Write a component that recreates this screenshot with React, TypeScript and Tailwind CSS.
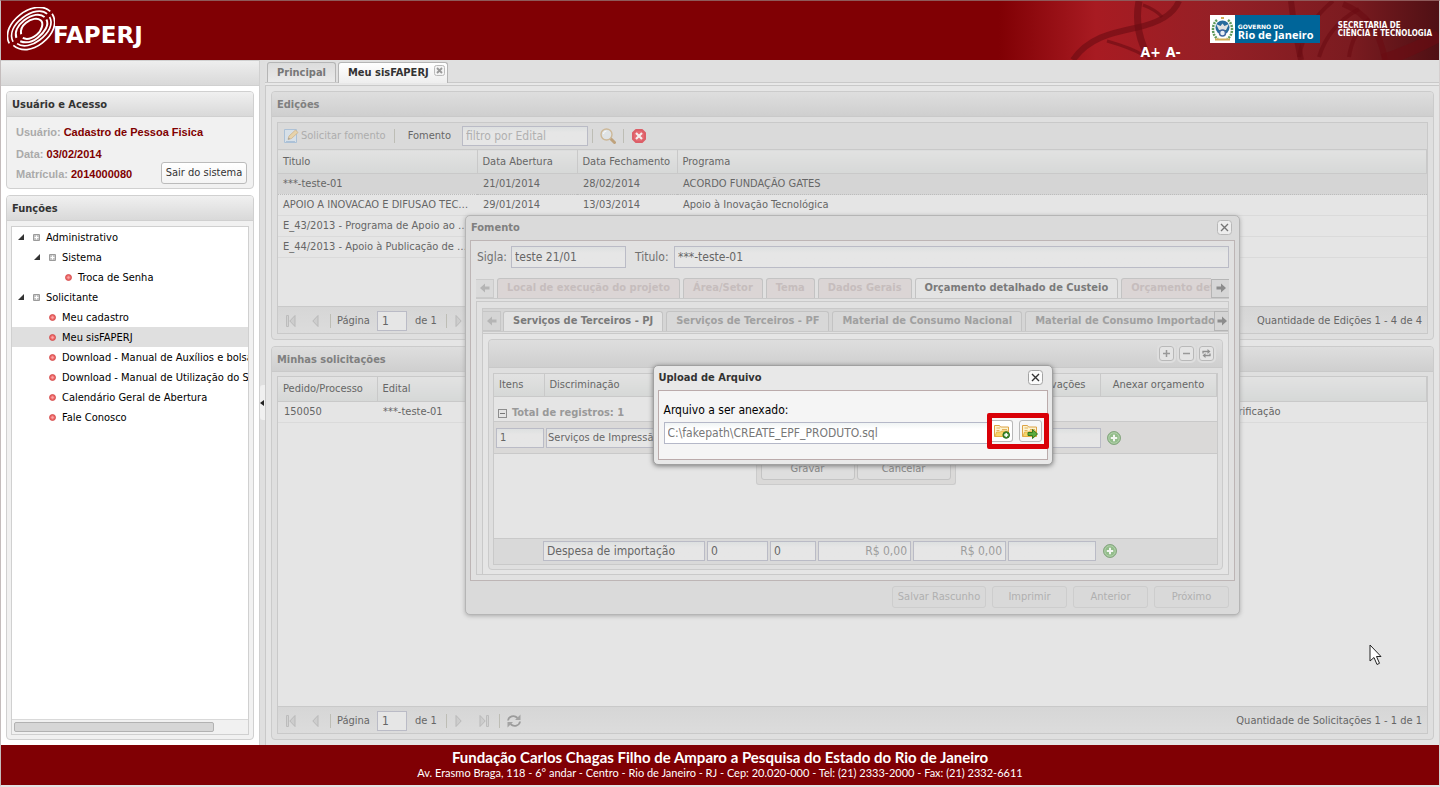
import { ReactNode } from "react";
import clsx from "clsx";

const editais = [
  { titulo: "***-teste-01", abertura: "21/01/2014", fechamento: "28/02/2014", programa: "ACORDO FUNDAÇÃO GATES" },
  { titulo: "APOIO A INOVACAO E DIFUSAO TECNOLOGICA", abertura: "29/01/2014", fechamento: "13/03/2014", programa: "Apoio à Inovação Tecnológica" },
  { titulo: "E_43/2013 - Programa de Apoio ao Desenvolvimento", abertura: "", fechamento: "", programa: "" },
  { titulo: "E_44/2013 - Apoio à Publicação de Periódicos", abertura: "", fechamento: "", programa: "" },
];

const menu = [
  { label: "Administrativo", level: 0, folder: true },
  { label: "Sistema", level: 1, folder: true },
  { label: "Troca de Senha", level: 2 },
  { label: "Solicitante", level: 0, folder: true },
  { label: "Meu cadastro", level: 1 },
  { label: "Meu sisFAPERJ", level: 1, selected: true },
  { label: "Download - Manual de Auxílios e bolsas", level: 1 },
  { label: "Download - Manual de Utilização do SisFAPERJ", level: 1 },
  { label: "Calendário Geral de Abertura", level: 1 },
  { label: "Fale Conosco", level: 1 },
];

const indent = ["pl-[6px]", "pl-[22px]", "pl-[38px]"];

/* Icons */

function CloseBox({ dim = false }: { dim?: boolean }) {
  return (
    <svg width="15" height="15" viewBox="0 0 15 15" className={clsx("shrink-0", dim && "opacity-60")}>
      <rect x=".5" y=".5" width="14" height="14" rx="3" fill="#fbfbfb" stroke="#a3a3a3" />
      <path d="M4 4l7 7M11 4l-7 7" stroke="#333" strokeWidth="1.4" />
    </svg>
  );
}

function GreenPlus() {
  return (
    <svg width="14" height="14" viewBox="0 0 14 14">
      <circle cx="7" cy="7" r="6.5" fill="#93bd8b" stroke="#86a581" />
      <circle cx="7" cy="7" r="5.2" fill="none" stroke="#b1d0aa" />
      <path d="M7 3.8v6.4M3.8 7h6.4" stroke="#f2f5f1" strokeWidth="2" />
    </svg>
  );
}

function FolderIcon({ kind }: { kind: "add" | "go" }) {
  return (
    <svg width="16" height="16" viewBox="0 0 16 16">
      <path d="M.5 13.5v-11h5l1 1.500h8v9.500z" fill="#fdf3cf" stroke="#dda345" />
      <path d="M2.500 5h3.500M8 6.500h5M2.500 7.500h3" stroke="#e2b25c" />
      <path d="M1 13.500l1.500-4.500h4l1-1h7v5.500z" fill="#f7d468" stroke="#e3ab40" strokeWidth=".8" />
      {kind === "add" ? (
        <>
          <circle cx="12.2" cy="12" r="3.3" fill="#3f8f2f" stroke="#2a6a20" />
          <path d="M12.2 10v4M10.2 12h4" stroke="#fff" strokeWidth="1.4" />
        </>
      ) : (
        <path d="M6 9.500h4.500V6.500l5 4.500-5 4.500V12.500H6z" fill="#5bab3c" stroke="#35791f" />
      )}
    </svg>
  );
}

function PageEditIcon() {
  return (
    <svg width="16" height="16" viewBox="0 0 16 16" className="opacity-60">
      <path d="M1.500 1.500h12v13h-12z" fill="#d6e4f2" stroke="#8fb2d6" />
      <path d="M3 14h9" stroke="#8fb2d6" strokeWidth="2" />
      <path d="M5 11.500l1-3.500 6.500-6 2.500 2.500-6.500 6z" fill="#f0d08c" stroke="#c79a5b" strokeWidth=".8" />
      <path d="M5 11.500l.6-2 1.500 1.500z" fill="#777" />
    </svg>
  );
}

function SearchIcon() {
  return (
    <svg width="16" height="16" viewBox="0 0 16 16">
      <path d="M10 10l4.500 4.500" stroke="#bfa27c" strokeWidth="3" strokeLinecap="round" />
      <circle cx="6.500" cy="6.500" r="5.500" fill="#dfe3e6" stroke="#cdb898" strokeWidth="1.400" />
      <path d="M3.500 6a3 3 0 0 1 3-3" stroke="#fafafa" fill="none" />
    </svg>
  );
}

function ClearIcon() {
  return (
    <svg width="16" height="16" viewBox="0 0 16 16">
      <path d="M5 2h6L14 5v6L11 14H5L2 11V5z" fill="#e46a72" stroke="#dc5f68" strokeLinejoin="round" strokeWidth="2" />
      <path d="M5 5l6 6M11 5l-6 6" stroke="#f5eded" strokeWidth="2.200" />
    </svg>
  );
}

function RefreshIcon({ size = 16 }: { size?: number }) {
  return (
    <svg width={size} height={size} viewBox="0 0 16 16" fill="none" stroke="#9b9b9b" strokeWidth="1.800">
      <path d="M2 7.500C2.500 3.500 8 1.500 11.500 5M14 8.500C13.500 12.500 8 14.500 4.500 11" />
      <path d="M14.500 1.500v5.500h-5.500zM1.500 14.500V9H7z" fill="#a3a3a3" stroke="none" />
    </svg>
  );
}

function PageArrow({ bar = false, flip = false }: { bar?: boolean; flip?: boolean }) {
  return (
    <svg width="16" height="16" viewBox="0 0 16 16" className={clsx(flip && "rotate-180")}>
      {bar && <path d="M3.500 2.500h2v11h-2z" fill="#d2d2d2" stroke="#bcbcbc" />}
      <path d="M12 2.500v11L6.800 8z" fill="#cdcdcd" stroke="#b9b9b9" />
    </svg>
  );
}

function ScrollArrow({ right = false }: { right?: boolean }) {
  return (
    <svg width="10" height="10" viewBox="0 0 10 10" className={clsx(right && "rotate-180")}>
      <path d="M0 5l5-4.500v3h4.500v3H5v3z" fill={right ? "#8c8c8c" : "#b5b5b5"} />
    </svg>
  );
}

function ToolBox({ label, children }: { label: string; children: ReactNode }) {
  return (
    <button
      aria-label={label}
      className="flex size-[15px] items-center justify-center rounded-[3px] border border-[#b9b9b9] bg-[#e4e4e4] outline-2 outline-[#dedede]"
    >
      {children}
    </button>
  );
}

/* Building blocks */

function PanelTitle({ children, dim = true }: { children: ReactNode; dim?: boolean }) {
  return (
    <h2
      className={clsx(
        "flex h-[25px] shrink-0 items-center border-b px-[5px] pt-px font-bold",
        dim
          ? "border-[#c9c9c9] bg-linear-to-b from-[#dedede] to-[#cfcfcf] text-[#808080]"
          : "border-[#d0d0d0] bg-linear-to-b from-[#f0f0f0] to-[#d9d9d9] text-[#333]",
      )}
    >
      {children}
    </h2>
  );
}

function Separator() {
  return <span className="h-[14px] w-px bg-[#bdbdb5]" />;
}

function Pager({ id, total, full = false }: { id: string; total: string; full?: boolean }) {
  return (
    <div className="flex h-[27px] shrink-0 items-center border-t border-[#c9c9c9] bg-linear-to-b from-[#d6d6d6] to-[#dcdcdc] px-[5px] pt-[2px] text-[#666]">
      <button aria-label="Primeira página"><PageArrow bar /></button>
      <button aria-label="Página anterior" className="ml-[7px] mr-[8px]"><PageArrow /></button>
      <Separator />
      <label htmlFor={id} className="ml-[6px] mr-[7px]">Página</label>
      <input id={id} defaultValue="1" className="h-5 w-[30px] border border-[#babbc6] bg-[#e6e6e6] px-1 text-[12px]" />
      <span className="ml-2 mr-[9px]">de 1</span>
      <Separator />
      <button aria-label="Próxima página" className="ml-[5px] mr-[8px]"><PageArrow flip /></button>
      <button aria-label="Última página" className="mr-[7px]"><PageArrow bar flip /></button>
      {full && <Separator />}
      <button aria-label="Atualizar" className="ml-[6px]"><RefreshIcon /></button>
      <span className="ml-auto whitespace-nowrap">{total}</span>
    </div>
  );
}

function InnerTab({ children, active = false, locked = false }: { children: ReactNode; active?: boolean; locked?: boolean }) {
  return (
    <button
      role="tab"
      aria-selected={active}
      className={clsx(
        "h-5 shrink-0 rounded-t-[3px] border border-b-0 border-[#c3c3c3] px-[9px] font-bold whitespace-nowrap",
        active && "bg-[#e3e3e3] text-[#7a7a7a]",
        locked && "bg-[#dbd5d5] text-[#c6bdbd]",
        !active && !locked && "bg-[#d8d8d8] text-[#a0a0a0]",
      )}
    >
      {children}
    </button>
  );
}

function FooterButton({ children, wide = false }: { children: ReactNode; wide?: boolean }) {
  return (
    <button className={clsx("h-[22px] rounded-[3px] border border-[#cdcdcd] bg-[#d9d9d9] text-[#b0b0b0]", wide ? "w-[94px]" : "w-[75px]")}>
      {children}
    </button>
  );
}

const field = "border border-[#babbc6] bg-linear-to-b from-[#dde0e0] to-[#e6e6e6] to-30% text-[12px] text-[#666]";
const gridHead = "border-r border-b border-[#c9c9c9] bg-linear-to-b from-[#e2e2e2] to-[#d6d8d7] px-[5px] font-normal";

/* Page regions */

function Header() {
  return (
    <header className="relative flex h-[59px] shrink-0 items-start overflow-hidden bg-[#800004] text-white">
      <svg className="absolute top-0 right-0 h-full w-[440px]" viewBox="0 0 440 59" preserveAspectRatio="none" fill="none">
        <defs>
          <linearGradient id="banner" x1="0" x2="1">
            <stop offset="0" stopColor="#800004" />
            <stop offset=".22" stopColor="#a81b22" />
            <stop offset=".5" stopColor="#942026" />
            <stop offset=".8" stopColor="#7b1b20" />
            <stop offset="1" stopColor="#4f1014" />
          </linearGradient>
        </defs>
        <rect width="440" height="59" fill="url(#banner)" />
        <g stroke="#6a0c12" strokeOpacity=".6" strokeWidth="6">
          <path d="M74 59c15-22 38-27 62-32 20-4 38-12 44-27" />
          <path d="M140 0c-4 20 0 42 12 59" strokeWidth="7" />
          <path d="M108 40c14 4 26 8 36 14M144 4c8 3 14 6 19 12" strokeWidth="3" />
          <path d="M292 0c2 18 6 40 10 59M344 3c26 10 38 32 42 56" />
          <path d="M300 56c4-22 14-40 34-56M320 56c6-20 18-36 40-48M350 56c2-14 8-28 20-38" strokeWidth="4" />
          <path d="M384 59c20-6 36-14 56-24" strokeWidth="12" />
        </g>
      </svg>

      <div className="relative ml-[6px] mt-[6px] flex">
        <svg width="48" height="44" viewBox="0 0 48 44" fill="none" stroke="#fff" strokeWidth="1.700">
          <g transform="rotate(-38 24 22)">
            <path d="M-2 20C0 9 12 4 24 4c14 0 25 7 26 16" />
            <path d="M0 24c2 10 12 16 24 16 14 0 25-6 26-17" />
            <path d="M2 21C4 12 13 8 24 8c12 0 21 5 22 12" />
            <path d="M4 25c2 7 11 11 20 11 12 0 21-4 22-12" />
            <path d="M7 20c2-6 9-9 17-9 10 0 17 4 18 10" strokeWidth="2" />
            <path d="M8 25c3 5 9 8 16 8 9 0 17-3 18-9" strokeWidth="2" />
            <path d="M13 20c2-4 6-6 11-6 7 0 12 3 13 7s-5 9-12 9c-6 0-11-2-13-6" strokeWidth="2" />
          </g>
        </svg>
        <span className="-ml-[2px] mt-[14px] font-['DejaVu_Sans'] text-[23px] leading-[28px] font-bold">FAPERJ</span>
      </div>

      <div className="relative ml-auto flex items-start pr-[7px]">
        <div className="mr-[29px] mt-[42px] flex gap-[5px] text-[14px] leading-[18px] font-bold">
          <button>A+</button>
          <button>A-</button>
        </div>
        <div className="mt-[14px] flex h-7 w-[110px] bg-[#006599]">
          <svg width="25" height="28" viewBox="0 0 25 28">
            <rect width="25" height="28" fill="#fff" />
            <path d="M7 5C1 10 2 21 8 24M18 5c6 5 5 16-1 19" fill="none" stroke="#5f9a5b" strokeWidth="2.500" strokeDasharray="2 1" />
            <circle cx="12.500" cy="12.500" r="7" fill="#286b9d" />
            <path d="M6 9l4.500 2 2-2.500 2 2.500L19 9l-3 6H9z" fill="#e2e2e2" />
            <path d="M9 15h7l-1 4h-5z" fill="#3c8c55" />
            <circle cx="12.500" cy="18" r="3" fill="#e9eef5" stroke="#3f66a1" strokeWidth="1.500" />
            <path d="M5 24.500h15M11 3h3" stroke="#d1ad57" strokeWidth="2" />
          </svg>
          <p className="pl-[3px] pt-2 font-bold whitespace-nowrap">
            <span className="block font-['DejaVu_Sans'] text-[6px] leading-[7px]">GOVERNO DO</span>
            <span className="block font-['Open_Sans'] text-[11px] leading-[9px]">Rio de Janeiro</span>
          </p>
        </div>
        <p className="mt-[21px] ml-[18px] text-[8px] leading-[8px] font-bold whitespace-nowrap">
          SECRETARIA DE
          <br />
          CIÊNCIA E TECNOLOGIA
        </p>
      </div>
    </header>
  );
}

function Sidebar() {
  return (
    <aside className="flex w-[259px] shrink-0 flex-col bg-white">
      <div className="h-[26px] shrink-0 border border-l-0 border-[#d0d0d0] bg-linear-to-b from-[#eee] to-[#d9d9d9]" />
      <div className="flex min-h-0 flex-1 flex-col gap-[6px] border-r border-[#d0d0d0] p-[5px]">
        <section className="shrink-0 overflow-hidden rounded-[4px] border border-[#d0d0d0] bg-[#f1f1f1]">
          <PanelTitle dim={false}>Usuário e Acesso</PanelTitle>
          <div className="flex items-end justify-between pr-[6px] pb-[4px] pl-[9px]">
            <dl className="font-['Liberation_Sans',sans-serif] leading-5 font-bold whitespace-nowrap text-[#800000]">
              <div className="mb-[2px] flex h-[25px] w-0 items-end gap-[3px]"><dt className="text-[#aaa]">Usuário:</dt><dd>Cadastro de Pessoa Fisica</dd></div>
              <div className="flex gap-[3px]"><dt className="text-[#aaa]">Data:</dt><dd>03/02/2014</dd></div>
              <div className="flex gap-[3px]"><dt className="text-[#aaa]">Matrícula:</dt><dd>2014000080</dd></div>
            </dl>
            <button className="h-[22px] w-[86px] rounded-[3px] border border-[#bbb] bg-linear-to-b from-white to-[#f4f4f4] whitespace-nowrap text-[#333]">
              Sair do sistema
            </button>
          </div>
        </section>

        <section className="flex min-h-0 flex-1 flex-col overflow-hidden rounded-[4px] border border-[#d0d0d0] bg-[#f1f1f1]">
          <PanelTitle dim={false}>Funções</PanelTitle>
          <div className="m-[4px] mt-[5px] flex min-h-0 flex-1 flex-col border border-[#d0d0d0] bg-white">
            <ul className="min-h-0 flex-1 overflow-hidden text-black">
              {menu.map((item) => (
                <li
                  key={item.label}
                  className={clsx("flex h-5 items-center pt-px whitespace-nowrap", indent[item.level], item.selected && "bg-[#dfdfdf]")}
                >
                  {item.folder ? (
                    <>
                      <svg width="7" height="7" viewBox="0 0 7 7" className="mr-2 shrink-0">
                        <path d="M6 0v6H0z" fill="#333" />
                      </svg>
                      <svg width="7" height="7" viewBox="0 0 7 7" className="mr-[6px] shrink-0">
                        <rect width="7" height="7" rx="1" fill="#9b9b9b" />
                        <rect x="1" y="1" width="5" height="5" fill="#c4c4c4" />
                        <path d="M3.500 1.500v4M1.500 3.500h4" stroke="#fff" />
                      </svg>
                    </>
                  ) : (
                    <svg width="7" height="7" viewBox="0 0 7 7" className="mr-[6px] ml-[15px] shrink-0">
                      <circle cx="3.500" cy="3.500" r="3" fill="#ee6a6a" stroke="#cf4545" strokeWidth=".8" />
                      <circle cx="3.500" cy="3.500" r="1.200" fill="#f9a8a8" />
                    </svg>
                  )}
                  <a href="#">{item.label}</a>
                </li>
              ))}
            </ul>
            <div className="flex h-[15px] shrink-0 items-center border-t border-[#d9d9d9] bg-[#f1f1f1] px-[2px]">
              <div className="h-[10px] w-[86%] rounded-[2px] border border-[#b2b2b2] bg-[#d6d6d6]" />
            </div>
          </div>
        </section>
      </div>
    </aside>
  );
}

function Editions() {
  return (
    <section className="flex h-[249px] shrink-0 flex-col overflow-hidden rounded-[4px] border border-[#cbcbcb] bg-[#dfdfdf]">
      <PanelTitle>Edições</PanelTitle>
      <div className="m-[5px] flex min-h-0 flex-1 flex-col border border-[#c9c9c9] bg-[#e5e5e5]">
        <div className="flex h-[26px] shrink-0 items-center bg-[#dadada] pl-[5px] text-[#666]">
          <button className="flex items-center gap-[2px] text-[#adadad]"><PageEditIcon />Solicitar fomento</button>
          <span className="mr-[13px] ml-2 flex"><Separator /></span>
          <label htmlFor="filtro">Fomento</label>
          <input id="filtro" placeholder="filtro por Edital" className={clsx(field, "mr-[4px] ml-[11px] h-5 w-[126px] px-[3px] placeholder:text-[#b0b0b0]")} />
          <Separator />
          <button aria-label="Pesquisar" className="mx-[7px]"><SearchIcon /></button>
          <Separator />
          <button aria-label="Limpar" className="ml-[7px]"><ClearIcon /></button>
        </div>
        <table className="w-full shrink-0 table-fixed border-collapse text-[#666]">
          <colgroup>
            <col className="w-[199px]" />
            <col className="w-[100px]" />
            <col className="w-[100px]" />
            <col />
          </colgroup>
          <thead>
            <tr className="h-6 border-t border-[#c9c9c9]">
              {["Titulo", "Data Abertura", "Data Fechamento", "Programa"].map((h) => (
                <th key={h} className={clsx(gridHead, "text-left whitespace-nowrap")}>{h}</th>
              ))}
            </tr>
          </thead>
          <tbody>
            {editais.map((e, i) => (
              <tr key={e.titulo} className={clsx("h-[21px] border-b", i === 0 ? "border-dotted border-[#bcbcbc] bg-[#d5d5d5]" : "border-[#dadada]")}>
                <td className="truncate pr-[6px] pl-[5px]">{e.titulo}</td>
                <td className="px-[6px]">{e.abertura}</td>
                <td className="px-[6px]">{e.fechamento}</td>
                <td className="px-[6px]">{e.programa}</td>
              </tr>
            ))}
          </tbody>
        </table>
        <div className="flex-1" />
        <Pager id="pagina-edicoes" total="Quantidade de Edições 1 - 4 de 4" />
      </div>
    </section>
  );
}

function Requests() {
  return (
    <section className="flex min-h-0 flex-1 flex-col overflow-hidden rounded-[4px] border border-[#cbcbcb] bg-[#dfdfdf]">
      <PanelTitle>Minhas solicitações</PanelTitle>
      <div className="m-[5px] mt-1 flex min-h-0 flex-1 flex-col border border-[#c9c9c9] bg-[#e5e5e5]">
        <table className="w-full table-fixed border-collapse text-[#666]">
          <colgroup>
            <col className="w-[99px]" />
            <col />
            <col className="w-[240px]" />
          </colgroup>
          <thead>
            <tr className="h-6">
              <th className={clsx(gridHead, "text-left")}>Pedido/Processo</th>
              <th className={clsx(gridHead, "text-left")}>Edital</th>
              <th className={clsx(gridHead, "text-left")}>Situação</th>
            </tr>
          </thead>
          <tbody>
            <tr className="h-[21px] border-b border-[#dadada]">
              <td className="px-[6px]">150050</td>
              <td className="px-[6px]">***-teste-01</td>
              <td className="pl-[21px]">Em verificação</td>
            </tr>
          </tbody>
        </table>
        <div className="flex-1" />
        <Pager id="pagina-solicitacoes" full total="Quantidade de Solicitações 1 - 1 de 1" />
      </div>
    </section>
  );
}

function BudgetGrid() {
  return (
    <div className="flex min-h-0 flex-1 flex-col rounded-[4px] border border-[#cbcbcb] bg-[#dfdfdf]">
      <div className="flex h-[28px] shrink-0 items-center justify-end gap-[5px] rounded-t-[4px] border-b border-[#c9c9c9] bg-linear-to-b from-[#dedede] to-[#cfcfcf] pr-2">
        <ToolBox label="Adicionar">
          <svg width="9" height="9"><path d="M4.500 1v7M1 4.500h7" stroke="#999" strokeWidth="1.500" /></svg>
        </ToolBox>
        <ToolBox label="Remover">
          <svg width="9" height="9"><path d="M1 4.500h7" stroke="#999" strokeWidth="1.500" /></svg>
        </ToolBox>
        <ToolBox label="Recarregar">
          <svg width="9" height="9" fill="none" stroke="#8f8f8f" strokeWidth="1.300">
            <path d="M1 4.500V2.500h5M8 4.500v2H3" />
            <path d="M5.500 0L8.500 2.500 5.500 5zM3.500 4L.5 6.500l3 2.500z" fill="#8f8f8f" stroke="none" />
          </svg>
        </ToolBox>
      </div>
      <div className="m-[4px] mt-[5px] flex min-h-0 flex-1 flex-col border border-[#c9c9c9] bg-[#e5e5e5]">
        <table className="w-full table-fixed border-collapse text-[#666]">
          <colgroup>
            <col className="w-[50px]" />
            <col />
            <col className="w-[94px]" />
            <col className="w-[116px]" />
          </colgroup>
          <thead>
            <tr className="h-[23px]">
              <th className={clsx(gridHead, "text-left")}>Itens</th>
              <th className={clsx(gridHead, "text-left")}>Discriminação</th>
              <th className={clsx(gridHead, "text-center")}>Observações</th>
              <th className={clsx(gridHead, "text-center")}>Anexar orçamento</th>
            </tr>
          </thead>
        </table>
        <div className="flex h-[25px] shrink-0 items-end gap-[5px] border-b border-[#c9c9c9] pl-1 font-bold text-[#999]">
          <svg width="9" height="9" viewBox="0 0 9 9" className="mb-[3px]">
            <rect x=".5" y=".5" width="8" height="8" fill="#e4e4e4" stroke="#8e8e8e" />
            <path d="M2 4.500h5" stroke="#777" />
          </svg>
          Total de registros: 1
        </div>
        <div className="flex h-8 shrink-0 items-center gap-[2px] border-b border-[#c9c9c9] bg-[#dad9d8] pl-[2px]">
          <input aria-label="Item" defaultValue="1" className={clsx(field, "h-5 w-[48px] px-[3px] !text-[11px]")} />
          <input aria-label="Discriminação" defaultValue="Serviços de Impressão" className={clsx(field, "h-5 w-[160px] px-px !text-[11px]")} />
          <input aria-label="Observações" className={clsx(field, "h-5 min-w-0 flex-1")} />
          <button aria-label="Anexar orçamento do item" className="mr-[96px] ml-1"><GreenPlus /></button>
        </div>
        <div className="flex min-h-0 flex-1 items-start justify-center">
          <div className="flex gap-[2px] rounded-b-[3px] border border-t-0 border-[#cbcbcb] bg-[#dad9d8] p-1 text-[#858585]">
            <button className="h-[22px] w-[94px] rounded-[3px] border border-[#c4c4c4] bg-[#dedede]">Gravar</button>
            <button className="h-[22px] w-[94px] rounded-[3px] border border-[#c4c4c4] bg-[#dedede]">Cancelar</button>
          </div>
        </div>
        <div className="flex h-[26px] shrink-0 items-center gap-[2px] border-t border-[#c9c9c9] bg-[#d9d9d9] pl-[49px]">
          <input aria-label="Despesa" defaultValue="Despesa de importação" className={clsx(field, "h-5 w-[162px] px-[3px]")} />
          <input aria-label="Quantidade" defaultValue="0" className={clsx(field, "h-5 w-[61px] px-[3px]")} />
          <input aria-label="Meses" defaultValue="0" className={clsx(field, "h-5 w-[46px] px-[3px]")} />
          <input aria-label="Valor unitário" defaultValue="R$ 0,00" className={clsx(field, "h-5 w-[93px] px-[3px] text-right !text-[#9c9c9c]")} />
          <input aria-label="Valor total" defaultValue="R$ 0,00" className={clsx(field, "h-5 w-[93px] px-[3px] text-right !text-[#9c9c9c]")} />
          <input aria-label="Observação da despesa" className={clsx(field, "h-5 w-[88px]")} />
          <button aria-label="Anexar orçamento da despesa" className="ml-[5px]"><GreenPlus /></button>
        </div>
      </div>
    </div>
  );
}

function FomentoWindow() {
  return (
    <section role="dialog" aria-label="Fomento" className="flex h-[400px] w-[775px] max-w-full flex-col rounded-[5px] border border-[#b5b5b5] bg-[#dadada] px-1 shadow-[0_1px_4px_#aaa]">
      <div className="flex h-6 shrink-0 items-center justify-between px-px pr-[3px] font-bold text-[#808080]">
        <h2>Fomento</h2>
        <button aria-label="Fechar fomento"><CloseBox dim /></button>
      </div>
      <div className="flex min-h-0 flex-1 flex-col border border-[#bdb5b5] bg-[#e1e1e1] p-[5px]">
        <div className="flex shrink-0 items-center text-[12px] text-[#707070]">
          <label htmlFor="sigla" className="w-[35px] pl-px">Sigla:</label>
          <input id="sigla" defaultValue="teste 21/01" className={clsx(field, "h-[22px] w-[115px] px-[3px]")} />
          <label htmlFor="titulo" className="ml-[9px] w-[39px]">Titulo:</label>
          <input id="titulo" defaultValue="***-teste-01" className={clsx(field, "h-[22px] min-w-0 flex-1 px-[3px]")} />
        </div>

        <div className="mt-[10px] flex h-[20px] shrink-0" role="tablist">
          <button aria-label="Abas anteriores" className="mt-px mr-[3px] flex w-[18px] shrink-0 items-center justify-center border border-l-0 border-[#cbcbcb] bg-[#dadada]"><ScrollArrow /></button>
          <div className="flex min-w-0 flex-1 gap-[3px] overflow-hidden">
            <InnerTab locked>Local de execução do projeto</InnerTab>
            <InnerTab locked>Área/Setor</InnerTab>
            <InnerTab locked>Tema</InnerTab>
            <InnerTab locked>Dados Gerais</InnerTab>
            <InnerTab active>Orçamento detalhado de Custeio</InnerTab>
            <InnerTab locked>Orçamento detalhado de Capital</InnerTab>
          </div>
          <button aria-label="Próximas abas" className="mt-px flex w-[18px] shrink-0 items-center justify-center border border-r-0 border-[#b5b5b5] bg-[#d6d6d6]"><ScrollArrow right /></button>
        </div>
        <div className="h-[4px] shrink-0 border-y border-[#c9c9c9]" />

        <div className="flex min-h-0 flex-1 flex-col border border-t-0 border-[#c9c9c9] pt-[6px] pl-[5px]">
          <div className="flex h-[23px] shrink-0 border-t border-l border-[#c9c9c9] bg-[#d5d5d5] pt-[2px]" role="tablist">
            <button aria-label="Subabas anteriores" className="mr-[2px] flex w-[18px] shrink-0 items-center justify-center border border-l-0 border-[#c6c6c6]"><ScrollArrow /></button>
            <div className="flex min-w-0 flex-1 gap-[3px] overflow-hidden">
              <InnerTab active>Serviços de Terceiros - PJ</InnerTab>
              <InnerTab>Serviços de Terceiros - PF</InnerTab>
              <InnerTab>Material de Consumo Nacional</InnerTab>
              <InnerTab>Material de Consumo Importado</InnerTab>
            </div>
            <button aria-label="Próximas subabas" className="flex w-[14px] shrink-0 items-center justify-center border border-r-0 border-[#b5b5b5]"><ScrollArrow right /></button>
          </div>
          <div className="h-[3px] shrink-0 border-y border-l border-[#c9c9c9]" />
          <div className="flex min-h-0 flex-1 flex-col border-l border-[#c9c9c9] bg-[#e5e5e5] p-[5px] pb-1">
            <BudgetGrid />
          </div>
        </div>
      </div>
      <div className="flex shrink-0 justify-end gap-[6px] px-[6px] pt-[5px] pb-[6px]">
        <FooterButton wide>Salvar Rascunho</FooterButton>
        <FooterButton>Imprimir</FooterButton>
        <FooterButton>Anterior</FooterButton>
        <FooterButton>Próximo</FooterButton>
      </div>
    </section>
  );
}

function UploadWindow() {
  return (
    <section role="dialog" aria-label="Upload de Arquivo" className="flex w-[400px] max-w-full flex-col rounded-[5px] border border-[#a0a0a0] bg-[#e8e8e8] px-1 pb-1 shadow-[0_1px_5px_#777]">
      <div className="flex h-6 items-center justify-between pr-[5px] pl-px font-bold text-[#333]">
        <h2>Upload de Arquivo</h2>
        <button aria-label="Fechar upload"><CloseBox /></button>
      </div>
      <div className="h-[70px] border border-[#bbabab] bg-[#f5f5f5] pt-[9px] pl-[5px] text-[12px]">
        <label htmlFor="arquivo" className="block h-[22px] leading-[20px] text-black">Arquivo a ser anexado:</label>
        <div className="flex items-start">
          <input
            id="arquivo"
            readOnly
            value="C:\fakepath\CREATE_EPF_PRODUTO.sql"
            className="h-[22px] min-w-0 flex-1 border border-r-0 border-[#b5b8c8] bg-linear-to-b from-[#f0f4f4] to-white to-30% px-[3px] text-[#777]"
          />
          {/* highlighted actions */}
          <div className="-mt-[9px] -mr-[2px] flex h-[36px] w-[62px] items-start gap-[6px] rounded-[2px] border-[5px] border-[#d90007] bg-[#f5f5f5] pt-[2px]">
            <button aria-label="Escolher arquivo" className="flex h-[22px] w-[21px] items-center justify-center rounded-r-[3px] border border-l-0 border-[#b8b8b8] bg-white"><FolderIcon kind="add" /></button>
            <button aria-label="Enviar arquivo" className="flex h-[22px] w-[23px] items-center justify-center rounded-[3px] border border-[#b8b8b8] bg-[#f7f7f7]"><FolderIcon kind="go" /></button>
          </div>
        </div>
      </div>
    </section>
  );
}

export default function App() {
  return (
    <div className="flex h-screen flex-col border-x border-t border-b-2 border-t-[#8e5a5a] border-r-[#d5cfcf] border-b-[#e3e3e3] border-l-[#c4bcbc] font-['DejaVu_Sans_Condensed',Tahoma,sans-serif] text-[11px] leading-4">
      <Header />
      <div className="flex min-h-0 flex-1">
        <Sidebar />
        <div className="flex w-[5px] shrink-0 items-center bg-[#dfdfdf]">
          <button aria-label="Recolher menu" className="flex h-[35px] w-[5px] items-center rounded-l-[3px] bg-[#f0f0f0]">
            <svg width="4" height="6" viewBox="0 0 4 6"><path d="M4 0v6L0 3z" fill="#222" /></svg>
          </button>
        </div>
        <main className="flex min-w-0 flex-1 flex-col bg-[#e5e5e5]">
          <div className="flex h-[23px] shrink-0 items-end gap-[2px] border-b border-[#c9c9c9] bg-[#e0e0e0] pl-[2px]" role="tablist">
            <button role="tab" aria-selected="false" className="h-[20px] rounded-t-[3px] border border-b-0 border-[#b5b5b5] bg-linear-to-b from-[#dcdcdc] to-[#eaeaea] px-[9px] font-bold text-[#777]">
              Principal
            </button>
            <button role="tab" aria-selected="true" className="-mb-px flex h-[21px] rounded-t-[3px] border border-b-0 border-[#b5b5b5] bg-linear-to-b from-white to-[#eee] pr-[2px] pl-[9px] font-bold text-[#333]">
              <span className="mr-[5px] self-center">Meu sisFAPERJ</span>
              <svg width="11" height="11" viewBox="0 0 11 11" className="mt-[2px]">
                <rect x=".5" y=".5" width="10" height="10" rx="2" fill="#f3f3f3" stroke="#bbb" />
                <path d="M3 3l5 5M8 3L3 8" stroke="#999" strokeWidth="1.800" />
              </svg>
            </button>
          </div>
          <div className="h-[3px] shrink-0 border-b border-[#c9c9c9] bg-[#e8e8e8]" />
          <div className="relative flex min-h-0 flex-1 flex-col gap-[6px] border-l border-[#c9c9c9] p-[5px]">
            <Editions />
            <Requests />
            <div className="absolute inset-0 flex items-center justify-center pb-[2px]">
              <FomentoWindow />
            </div>
            <div className="absolute inset-0 flex items-center justify-center pb-[2px]">
              <UploadWindow />
            </div>
            <svg className="absolute right-[57px] bottom-[79px]" width="13" height="22" viewBox="0 0 13 22">
              <path d="M1 1v16l4-3.500 3 7 2.500-1.200-3-6.800H12z" fill="#fff" stroke="#222" />
            </svg>
          </div>
        </main>
      </div>
      <footer className="flex h-10 shrink-0 flex-col items-center bg-[#800004] pt-1 font-['Lato',sans-serif] text-white">
        <p className="text-[15px] leading-[17px] font-bold">Fundação Carlos Chagas Filho de Amparo a Pesquisa do Estado do Rio de Janeiro</p>
        <p className="text-[11px] leading-[14px]">Av. Erasmo Braga, 118 - 6° andar - Centro - Rio de Janeiro - RJ - Cep: 20.020-000 - Tel: (21) 2333-2000 - Fax: (21) 2332-6611</p>
      </footer>
    </div>
  );
}
